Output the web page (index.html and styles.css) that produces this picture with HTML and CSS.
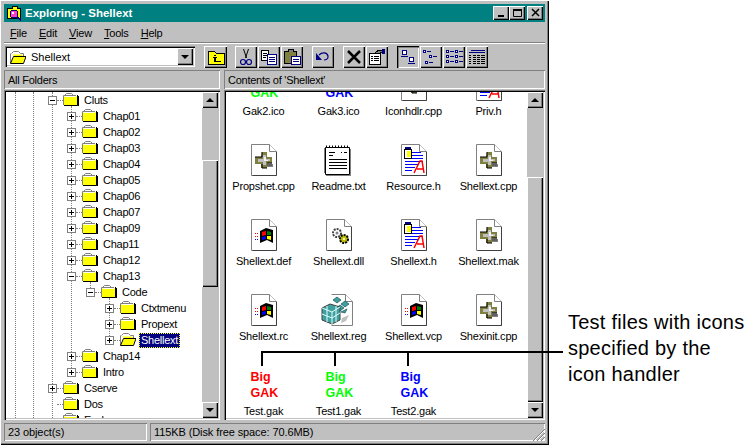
FILE: index.html
```html
<!DOCTYPE html>
<html lang="en">
<head>
<meta charset="utf-8">
<title>Exploring - Shellext</title>
<link rel="stylesheet" href="styles.css">
</head>
<body>
<svg class="defs" width="0" height="0" aria-hidden="true">
  <symbol id="folder" viewBox="0 0 16 14">
    <path d="M1.500 3.500L3.500 1.500H8.500L10.500 3.500" fill="#ffffff" stroke="#808080"/>
    <rect x="1" y="4" width="13" height="9" fill="#ffff00"/>
    <path d="M.5 13V3.500H13" fill="none" stroke="#808080"/>
    <path d="M1.500 4.500H13" stroke="#ffffff" fill="none"/>
    <path d="M14.500 3V13.500H1M15.500 4V14H2" fill="none" stroke="#000000"/>
  </symbol>
  <symbol id="openfolder" viewBox="0 0 16 14">
    <path d="M1.500 3.500L3.500 1.500H8.500L10.500 3.500H13.500V6" fill="#ffffff" stroke="#808080"/>
    <path d="M.5 13V3.500" fill="none" stroke="#808080"/>
    <path d="M1 13L4 6H16L13 13Z" fill="#ffff00"/>
    <path d="M.5 13.500H13.500L16 6.500H3.500L.5 13.500" fill="none" stroke="#000000"/>
    <path d="M2 4.500H12.500V6H4" fill="#ffff00"/>
  </symbol>
  <symbol id="page" viewBox="0 0 32 32">
    <path d="M3.500 .5H21.500L28.500 7.500V31.500H3.500Z" fill="#ffffff" stroke="#808080"/>
    <path d="M21.500 .5V7.500H28.500" fill="#ffffff" stroke="#808080"/>
    <path d="M4.500 31.500H28.500V8" fill="none" stroke="#404040"/>
  </symbol>
  <symbol id="cpp" viewBox="0 0 32 32">
    <use href="#page" width="32" height="32"/>
    <path d="M19 20H25V23H15V24H19Z" fill="#808080"/>
    <path d="M14 8H19V13H24V19H19V24H13V20H7V13H13Z" fill="#808040"/>
    <path d="M14 8V13H7M14 20V24H19M19 19H24" fill="none" stroke="#000000"/>
    <path d="M15 11H18V15H22V17H18V21H15V18H10V15H15Z" fill="#c0c0c0"/>
    <path d="M16 13H18V16H20V17H16Z" fill="#ffffff" opacity=".8"/>
    <path d="M19 19H24V22H19Z" fill="#606060"/>
  </symbol>
  <symbol id="win" viewBox="0 0 32 32">
    <use href="#page" width="32" height="32"/>
    <path d="M12 12L18 9L25 11V24L19 21L12 24Z" fill="#000000"/>
    <path d="M14 13L18 12V16L14 17Z" fill="#ff0000"/>
    <path d="M19 12L23 13V16L19 16Z" fill="#008000"/>
    <path d="M14 18L18 17V20L14 21Z" fill="#0000ff"/>
    <path d="M19 17L23 17V21L19 20Z" fill="#ffff00"/>
    <path d="M7 14.500H11M7 17.500H11" stroke="#ff0000" stroke-dasharray="1 1"/>
    <path d="M7 20.500H11" stroke="#0000ff" stroke-dasharray="1 1"/>
  </symbol>
  <symbol id="dll" viewBox="0 0 32 32">
    <use href="#page" width="32" height="32"/>
    <circle cx="14" cy="14" r="4" fill="#ffffff" stroke="#404040" stroke-width="2" stroke-dasharray="2 1"/>
    <circle cx="21" cy="20" r="4" fill="#c0c000" stroke="#000000" stroke-width="2" stroke-dasharray="2 1"/>
    <circle cx="21" cy="20" r="1" fill="#ffffff"/>
    <circle cx="14" cy="14" r="1.500" fill="#808080"/>
  </symbol>
  <symbol id="res" viewBox="0 0 32 32">
    <use href="#page" width="32" height="32"/>
    <rect x="6.500" y="5.500" width="7" height="9" fill="#ffffff" stroke="#000000"/>
    <rect x="9" y="7" width="4" height="6" fill="#ffff00"/>
    <rect x="7" y="3" width="6" height="2" fill="#000080"/>
    <path d="M14 8.500H23M14 11.500H25M14 14.500H25M7 17.500H25M7 20.500H20M7 23.500H17M7 26.500H14" stroke="#0000ff"/>
    <path d="M16 29L22 17H24L26 29M19 25H25" fill="none" stroke="#ff0000" stroke-width="1.500"/>
  </symbol>
  <symbol id="note" viewBox="0 0 32 32">
    <path d="M2.500 3.500H26.500V30.500H2.500Z" fill="#ffffff" stroke="#000000"/>
    <path d="M1.500 4V29M27.500 5V31M3 31.500H28" stroke="#808080" fill="none"/>
    <path d="M3.500 1.500V4M6.500 1.500V4M9.500 1.500V4M12.500 1.500V4M15.500 1.500V4M18.500 1.500V4M21.500 1.500V4M24.500 1.500V4" stroke="#000000"/>
    <path d="M6 8.500H12M18 8.500H19M21 8.500H24M6 11.500H10M6 15.500H24M6 18.500H24M6 21.500H24M6 24.500H24" stroke="#000000"/>
  </symbol>
  <symbol id="reg" viewBox="0 0 36 32">
    <path d="M10.500 .5H24.500L31.500 7.500V31.500H10.500" fill="#ffffff" stroke="#808080"/>
    <path d="M24.500 .5V7.500H31.500" fill="#ffffff" stroke="#808080"/>
    <path d="M16 3L20 6L16 9L12 6ZM24 7L28 10L24 13L20 10ZM19 11L23 14L19 17L15 14ZM26 15L24 19L20 18Z" fill="#40a0a0" stroke="#004040" stroke-width=".6"/>
    <path d="M1 14L9 10L19 13V26L11 30L1 26Z" fill="#40a0a0" stroke="#404040"/>
    <path d="M1 14L11 18L19 13M11 18V30M1 20L11 24L19 19M6 12V28M15 12V28" stroke="#e0ffff" fill="none"/>
    <path d="M21 24L28 21L25 27L20 29Z" fill="#c0c0c0"/>
  </symbol>
</svg>

<main class="page">
  <section class="window">
    <header class="titlebar">
      <svg class="title-icon" width="16" height="16" viewBox="0 0 16 16" shape-rendering="crispEdges">
        <path d="M1 3H6V1H11V3H14V13H1Z" fill="#ffff00" stroke="#000000"/>
        <circle cx="8" cy="9" r="4" fill="#ff40c0" stroke="#000080"/>
        <circle cx="7" cy="8" r="1.500" fill="#ffffff"/>
        <path d="M11 12L15 15" stroke="#000080" stroke-width="2"/>
      </svg>
      <span class="title-text">Exploring - Shellext</span>
      <div class="caption-buttons">
        <button class="cap raised"><svg width="10" height="10" viewBox="0 0 10 10"><rect x="1" y="7" width="6" height="2"/></svg></button>
        <button class="cap raised"><svg width="10" height="10" viewBox="0 0 10 10"><path d="M.5 1.500H8.500V8.500H.5Z" fill="none" stroke="#000"/><rect y="1" width="9" height="2"/></svg></button>
        <button class="cap raised cap-close"><svg width="10" height="10" viewBox="0 0 10 10"><path d="M1 1L8 8M8 1L1 8" stroke="#000" stroke-width="1.500"/></svg></button>
      </div>
    </header>

    <nav class="menubar">
      <span class="menu"><u>F</u>ile</span>
      <span class="menu"><u>E</u>dit</span>
      <span class="menu"><u>V</u>iew</span>
      <span class="menu"><u>T</u>ools</span>
      <span class="menu"><u>H</u>elp</span>
    </nav>

    <div class="toolbar">
      <div class="combo">
        <svg class="combo-icon" width="16" height="14"><use href="#openfolder"/></svg>
        <span class="combo-text">Shellext</span>
        <span class="combo-drop raised"><i class="arrow-down"></i></span>
      </div>
      <div class="tool-group group-up">
        <button class="tool tool-up raised">
          <svg width="20" height="16" viewBox="0 0 20 16" shape-rendering="crispEdges">
            <path d="M2 2H8L10 4H18V15H2Z" fill="#ffff00" stroke="#000000"/>
            <path d="M8 6H10V7H8ZM7 8H11V9H7ZM8 9H10V12H15V13H8Z"/>
          </svg>
        </button>
      </div>
      <div class="tool-group group-edit">
        <button class="tool raised">
          <svg width="16" height="18" viewBox="0 0 16 18">
            <path d="M5.500 1L8.500 10M10.500 1L7.500 10" stroke="#000000"/>
            <circle cx="5" cy="14" r="2.500" fill="none" stroke="#000080" stroke-width="1.200"/>
            <circle cx="11" cy="14" r="2.500" fill="none" stroke="#000080" stroke-width="1.200"/>
          </svg>
        </button>
        <button class="tool raised">
          <svg width="18" height="16" viewBox="0 0 18 16" shape-rendering="crispEdges">
            <path d="M1.500 1.500H8.500V11.500H1.500Z" fill="#ffffff" stroke="#000000"/>
            <path d="M3 4.500H7M3 6.500H7M3 8.500H6" stroke="#000000"/>
            <path d="M7.500 5.500H16.500V15.500H7.500Z" fill="#ffffff" stroke="#000080"/>
            <path d="M9 8.500H15M9 10.500H15M9 12.500H15" stroke="#000080"/>
          </svg>
        </button>
        <button class="tool raised">
          <svg width="18" height="18" viewBox="0 0 18 18" shape-rendering="crispEdges">
            <path d="M1.500 3.500H13.500V15.500H1.500Z" fill="#808040" stroke="#000000"/>
            <path d="M5 3.500V1.500H10V3.500" fill="#808080" stroke="#000000"/>
            <path d="M8.500 8.500H17.500V16.500H8.500Z" fill="#ffffff" stroke="#000080"/>
            <path d="M10 11.500H16M10 13.500H16" stroke="#000080"/>
          </svg>
        </button>
      </div>
      <div class="tool-group group-undo">
        <button class="tool raised">
          <svg width="16" height="14" viewBox="0 0 16 14">
            <path d="M4 5C7 2 12 2 13 6C13.500 9 11 10 9 10" fill="none" stroke="#000080" stroke-width="1.200"/>
            <path d="M1 3V10H7Z" fill="#000080"/>
          </svg>
        </button>
      </div>
      <div class="tool-group group-del">
        <button class="tool raised">
          <svg width="16" height="16" viewBox="0 0 16 16"><path d="M2 2L14 14M14 2L2 14" stroke="#000000" stroke-width="2.500"/></svg>
        </button>
        <button class="tool raised">
          <svg width="18" height="16" viewBox="0 0 18 16" shape-rendering="crispEdges">
            <path d="M1.500 4.500H12.500V15.500H1.500Z" fill="#ffffff" stroke="#000000"/>
            <path d="M3 7.500H5M6 7.500H11M3 9.500H5M6 9.500H11M3 11.500H5M6 11.500H11" stroke="#000000"/>
            <path d="M7 4L11 1H14V3L11 5Z" fill="#808080" stroke="#000000"/>
            <rect x="14" y="0" width="3" height="5" fill="#000080"/>
          </svg>
        </button>
      </div>
      <div class="tool-group group-view">
        <button class="tool sunken-btn">
          <svg width="18" height="16" viewBox="0 0 18 16" shape-rendering="crispEdges">
            <path d="M3.500 1.500H7.500V5.500H3.500ZM10.500 8.500H14.500V12.500H10.500Z" fill="#ffffff" stroke="#000080"/>
            <path d="M2 7.500H9M9 14.500H16" stroke="#000080"/>
          </svg>
        </button>
        <button class="tool raised">
          <svg width="18" height="16" viewBox="0 0 18 16" shape-rendering="crispEdges">
            <path d="M1.500 1.500H3.500V3.500H1.500ZM7.500 6.500H9.500V8.500H7.500ZM3.500 12.500H5.500V14.500H3.500Z" fill="#ffffff" stroke="#000080"/>
            <path d="M5 2.500H9M11 7.500H15M7 13.500H11" stroke="#000080"/>
          </svg>
        </button>
        <button class="tool raised">
          <svg width="18" height="16" viewBox="0 0 18 16" shape-rendering="crispEdges">
            <path d="M1.500 1.500H3.500V3.500H1.500ZM1.500 6.500H3.500V8.500H1.500ZM1.500 11.500H3.500V13.500H1.500ZM10.500 1.500H12.500V3.500H10.500ZM10.500 6.500H12.500V8.500H10.500ZM10.500 11.500H12.500V13.500H10.500Z" fill="#ffffff" stroke="#000080"/>
            <path d="M5 2.500H9M5 7.500H9M5 12.500H9M14 2.500H18M14 7.500H18M14 12.500H18" stroke="#000080"/>
          </svg>
        </button>
        <button class="tool raised">
          <svg width="18" height="16" viewBox="0 0 18 16" shape-rendering="crispEdges">
            <path d="M3 1.500H17M1 3.500H17" stroke="#000080"/>
            <path d="M1 6.500H3M5 6.500H8M9 6.500H12M13 6.500H17M1 8.500H3M5 8.500H8M9 8.500H12M13 8.500H17M1 10.500H3M5 10.500H8M9 10.500H12M13 10.500H17M1 12.500H3M5 12.500H8M9 12.500H12M13 12.500H17M1 14.500H3M5 14.500H8M9 14.500H12M13 14.500H17" stroke="#000000"/>
          </svg>
        </button>
      </div>
    </div>

    <div class="explorer">
      <div class="pane-head">All Folders</div>
      <div class="pane-head">Contents of 'Shellext'</div>

      <div class="pane">
        <div class="tree">
          <i class="guide guide-a"></i>
          <i class="guide guide-b"></i>
          <i class="guide guide-c"></i>
          <i class="guide guide-d"></i>
          <i class="guide guide-e"></i>
          <i class="guide guide-f"></i>

          <div class="row lv1"><b class="box minus"></b><svg class="fld" width="16" height="14"><use href="#folder"/></svg><span class="label">Cluts</span></div>
          <div class="row lv2"><b class="box plus"></b><svg class="fld" width="16" height="14"><use href="#folder"/></svg><span class="label">Chap01</span></div>
          <div class="row lv2"><b class="box plus"></b><svg class="fld" width="16" height="14"><use href="#folder"/></svg><span class="label">Chap02</span></div>
          <div class="row lv2"><b class="box plus"></b><svg class="fld" width="16" height="14"><use href="#folder"/></svg><span class="label">Chap03</span></div>
          <div class="row lv2"><b class="box plus"></b><svg class="fld" width="16" height="14"><use href="#folder"/></svg><span class="label">Chap04</span></div>
          <div class="row lv2"><b class="box plus"></b><svg class="fld" width="16" height="14"><use href="#folder"/></svg><span class="label">Chap05</span></div>
          <div class="row lv2"><b class="box plus"></b><svg class="fld" width="16" height="14"><use href="#folder"/></svg><span class="label">Chap06</span></div>
          <div class="row lv2"><b class="box plus"></b><svg class="fld" width="16" height="14"><use href="#folder"/></svg><span class="label">Chap07</span></div>
          <div class="row lv2"><b class="box plus"></b><svg class="fld" width="16" height="14"><use href="#folder"/></svg><span class="label">Chap09</span></div>
          <div class="row lv2"><b class="box plus"></b><svg class="fld" width="16" height="14"><use href="#folder"/></svg><span class="label">Chap11</span></div>
          <div class="row lv2"><b class="box plus"></b><svg class="fld" width="16" height="14"><use href="#folder"/></svg><span class="label">Chap12</span></div>
          <div class="row lv2"><b class="box minus"></b><svg class="fld" width="16" height="14"><use href="#folder"/></svg><span class="label">Chap13</span></div>
          <div class="row lv3"><b class="box minus"></b><svg class="fld" width="16" height="14"><use href="#folder"/></svg><span class="label">Code</span></div>
          <div class="row lv4"><b class="box plus"></b><svg class="fld" width="16" height="14"><use href="#folder"/></svg><span class="label">Ctxtmenu</span></div>
          <div class="row lv4"><b class="box plus"></b><svg class="fld" width="16" height="14"><use href="#folder"/></svg><span class="label">Propext</span></div>
          <div class="row lv4"><b class="box plus"></b><svg class="fld" width="16" height="14"><use href="#openfolder"/></svg><span class="label selected">Shellext</span></div>
          <div class="row lv2"><b class="box plus"></b><svg class="fld" width="16" height="14"><use href="#folder"/></svg><span class="label">Chap14</span></div>
          <div class="row lv2"><b class="box plus"></b><svg class="fld" width="16" height="14"><use href="#folder"/></svg><span class="label">Intro</span></div>
          <div class="row lv1"><b class="box plus"></b><svg class="fld" width="16" height="14"><use href="#folder"/></svg><span class="label">Cserve</span></div>
          <div class="row lv1"><b class="box none"></b><svg class="fld" width="16" height="14"><use href="#folder"/></svg><span class="label">Dos</span></div>
          <div class="row lv1"><b class="box none"></b><svg class="fld" width="16" height="14"><use href="#folder"/></svg><span class="label">Exchange</span></div>
        </div>
        <div class="scrollbar">
          <span class="sb-btn raised"><i class="arrow-up"></i></span>
          <span class="sb-gap tree-gap"></span>
          <span class="sb-thumb raised tree-thumb"></span>
          <span class="sb-rest"></span>
          <span class="sb-btn raised"><i class="arrow-down"></i></span>
        </div>
      </div>

      <div class="pane">
        <div class="files">
          <div class="file-grid">
            <figure class="file"><div class="gak gak-green"><span>Big</span><span>GAK</span></div><figcaption>Gak2.ico</figcaption></figure>
            <figure class="file"><div class="gak gak-blue"><span>Big</span><span>GAK</span></div><figcaption>Gak3.ico</figcaption></figure>
            <figure class="file"><svg width="32" height="32"><use href="#cpp"/></svg><figcaption>Iconhdlr.cpp</figcaption></figure>
            <figure class="file"><svg width="32" height="32"><use href="#res"/></svg><figcaption>Priv.h</figcaption></figure>

            <figure class="file"><svg width="32" height="32"><use href="#cpp"/></svg><figcaption>Propshet.cpp</figcaption></figure>
            <figure class="file"><svg width="32" height="32"><use href="#note"/></svg><figcaption>Readme.txt</figcaption></figure>
            <figure class="file"><svg width="32" height="32"><use href="#res"/></svg><figcaption>Resource.h</figcaption></figure>
            <figure class="file"><svg width="32" height="32"><use href="#cpp"/></svg><figcaption>Shellext.cpp</figcaption></figure>

            <figure class="file"><svg width="32" height="32"><use href="#win"/></svg><figcaption>Shellext.def</figcaption></figure>
            <figure class="file"><svg width="32" height="32"><use href="#dll"/></svg><figcaption>Shellext.dll</figcaption></figure>
            <figure class="file"><svg width="32" height="32"><use href="#res"/></svg><figcaption>Shellext.h</figcaption></figure>
            <figure class="file"><svg width="32" height="32"><use href="#cpp"/></svg><figcaption>Shellext.mak</figcaption></figure>

            <figure class="file"><svg width="32" height="32"><use href="#win"/></svg><figcaption>Shellext.rc</figcaption></figure>
            <figure class="file"><svg width="36" height="32"><use href="#reg"/></svg><figcaption>Shellext.reg</figcaption></figure>
            <figure class="file"><svg width="32" height="32"><use href="#win"/></svg><figcaption>Shellext.vcp</figcaption></figure>
            <figure class="file"><svg width="32" height="32"><use href="#cpp"/></svg><figcaption>Shexinit.cpp</figcaption></figure>

            <figure class="file"><div class="gak gak-red"><span>Big</span><span>GAK</span></div><figcaption>Test.gak</figcaption></figure>
            <figure class="file"><div class="gak gak-green"><span>Big</span><span>GAK</span></div><figcaption>Test1.gak</figcaption></figure>
            <figure class="file"><div class="gak gak-blue"><span>Big</span><span>GAK</span></div><figcaption>Test2.gak</figcaption></figure>
          </div>
        </div>
        <div class="scrollbar">
          <span class="sb-btn raised"><i class="arrow-up"></i></span>
          <span class="sb-gap file-gap"></span>
          <span class="sb-thumb raised file-thumb"></span>
          <span class="sb-btn raised"><i class="arrow-down"></i></span>
        </div>
      </div>
    </div>

    <footer class="statusbar">
      <div class="status status-count">23 object(s)</div>
      <div class="status status-disk">
        <span>115KB (Disk free space: 70.6MB)</span>
        <svg class="grip" width="13" height="13" viewBox="0 0 13 13"><path d="M13 1L1 13M13 5L5 13M13 9L9 13" stroke="#808080" fill="none"/><path d="M13 2L2 13M13 6L6 13M13 10L10 13" stroke="#ffffff" fill="none"/></svg>
      </div>
    </footer>
  </section>

  <aside class="callout">Test files with icons<br>specified by the<br>icon handler</aside>

  <i class="lead lead-h"></i>
  <i class="lead lead-v1"></i>
  <i class="lead lead-v2"></i>
  <i class="lead lead-v3"></i>
</main>
</body>
</html>
```

FILE: styles.css
```css
* { box-sizing: border-box; }

html, body {
  margin: 0;
  padding: 0;
  background: #ffffff;
}

body {
  font-family: "Liberation Sans", Arial, sans-serif;
  font-size: 11px;
  color: #000000;
  overflow: hidden;
}

.defs { position: absolute; }

.page {
  position: relative;
  display: flex;
  width: 751px;
  height: 447px;
}

.raised {
  background: #c0c0c0;
  border: 0;
  box-shadow: inset 1px 1px 0 #ffffff, inset -1px -1px 0 #000000, inset -2px -2px 0 #808080;
}

.window {
  display: flex;
  flex-direction: column;
  flex: none;
  width: 549px;
  height: 445px;
  padding: 4px 4px 3px 4px;
  background: #c0c0c0;
  box-shadow: inset 1px 1px 0 #ffffff, inset -1px -1px 0 #000000, inset -2px -2px 0 #808080;
}

/* title bar */
.titlebar {
  display: flex;
  align-items: center;
  flex: none;
  height: 18px;
  padding: 0 2px;
  background: #008080;
  color: #ffffff;
}

.title-icon { flex: none; margin-right: 3px; }

.title-text {
  font-size: 11.500px;
  font-weight: 700;
}

.caption-buttons { display: flex; margin-left: auto; }

.cap {
  display: flex;
  align-items: center;
  justify-content: center;
  width: 16px;
  height: 14px;
  padding: 0 0 0 1px;
}

.cap-close { margin-left: 2px; }

/* menu */
.menubar {
  display: flex;
  align-items: center;
  flex: none;
  height: 21px;
  padding: 1px 0 0;
  border-bottom: 1px solid #808080;
  box-shadow: 0 1px 0 #ffffff;
}

.menu { padding: 0 6px; font-size: 11px; letter-spacing: -.2px; }

/* toolbar */
.toolbar {
  display: flex;
  align-items: flex-start;
  flex: none;
  height: 26px;
  padding: 3px 0 0 1px;
}

.combo {
  display: flex;
  align-items: center;
  width: 190px;
  height: 21px;
  padding-left: 5px;
  background: #ffffff;
  box-shadow: inset 1px 1px 0 #808080, inset 2px 2px 0 #000000, inset -1px -1px 0 #ffffff, inset -2px -2px 0 #c0c0c0;
}

.combo-text { margin-left: 5px; font-size: 11px; }

.combo-drop {
  display: flex;
  align-items: center;
  justify-content: center;
  width: 16px;
  height: 17px;
  margin-left: auto;
  margin-right: 2px;
}

.tool-group { display: flex; gap: 1px; }
.group-up { margin-left: 9px; }
.group-edit { margin-left: 8px; }
.group-undo { margin-left: 9px; }
.group-del { margin-left: 9px; }
.group-view { margin-left: 9px; }

.tool {
  display: flex;
  align-items: center;
  justify-content: center;
  width: 22px;
  height: 22px;
  padding: 0;
}

.tool-up { width: 23px; }

.sunken-btn {
  background: #c0c0c0;
  border: 0;
  box-shadow: inset 1px 1px 0 #000000, inset 2px 2px 0 #808080, inset -1px -1px 0 #ffffff;
}

/* panes */
.explorer {
  display: grid;
  flex: none;
  grid-template-columns: 216px 321px;
  grid-template-rows: 19px 330px;
  column-gap: 4px;
  row-gap: 1px;
  margin-top: 1px;
}

.pane-head {
  padding: 3px 0 0 4px;
  line-height: 14px;
  font-size: 11px;
  letter-spacing: -.25px;
  box-shadow: inset 1px 1px 0 #808080, inset -1px -1px 0 #ffffff;
}

.pane {
  display: flex;
  overflow: hidden;
  padding: 2px;
  background: #ffffff;
  box-shadow: inset 1px 1px 0 #808080, inset 2px 2px 0 #000000, inset -1px -1px 0 #ffffff, inset -2px -2px 0 #c0c0c0;
}

/* tree */
.tree {
  position: relative;
  flex: 1;
  min-width: 0;
  overflow: hidden;
}

.guide {
  position: absolute;
  width: 0;
  border-left: 1px dotted #808080;
}

.guide-a { left: 9px; top: 0; bottom: 0; }
.guide-b { left: 27px; top: 0; bottom: 0; }
.guide-c { left: 46px; top: 0; bottom: 0; }
.guide-d { left: 65px; top: 14px; height: 266px; }
.guide-e { left: 84px; top: 190px; height: 10px; }
.guide-f { left: 103px; top: 206px; height: 42px; }

.row {
  position: relative;
  display: flex;
  align-items: center;
  height: 16px;
}

.lv1 { padding-left: 42px; }
.lv2 { padding-left: 61px; }
.lv3 { padding-left: 80px; }
.lv4 { padding-left: 99px; }

.box {
  position: relative;
  flex: none;
  width: 9px;
  height: 9px;
  background: #ffffff;
  border: 1px solid #808080;
}

.box::before {
  content: "";
  position: absolute;
  left: 1px;
  top: 3px;
  width: 5px;
  height: 1px;
  background: #000000;
}

.plus::after {
  content: "";
  position: absolute;
  left: 3px;
  top: 1px;
  width: 1px;
  height: 5px;
  background: #000000;
}

.none { background: transparent; border: 0; }
.none::before { display: none; }

.fld {
  flex: none;
  margin-left: 6px;
  margin-top: -2px;
}

.row::after {
  content: "";
  position: absolute;
  width: 6px;
  height: 0;
  top: 8px;
  border-top: 1px dotted #808080;
}

.lv1::after { left: 51px; }
.lv2::after { left: 70px; }
.lv3::after { left: 89px; }
.lv4::after { left: 108px; }

.label {
  margin-left: 3px;
  padding: 1px 2px;
  line-height: 13px;
  font-size: 11px;
  letter-spacing: -.25px;
}

.selected {
  background: #000080;
  color: #ffffff;
  outline: 1px dotted #ffff00;
  outline-offset: -1px;
}

/* scrollbar */
.scrollbar {
  display: flex;
  flex: none;
  flex-direction: column;
  width: 16px;
  background: #c0c0c0;
}

.sb-btn {
  display: flex;
  flex: none;
  align-items: center;
  justify-content: center;
  height: 16px;
}

.sb-gap { flex: none; }
.tree-gap { height: 52px; }
.file-gap { height: 69px; }
.sb-thumb { display: block; flex: none; }
.tree-thumb { height: 127px; }
.file-thumb { height: 225px; }
.sb-rest { flex: 1; }

.arrow-up {
  width: 0;
  height: 0;
  border: 4px solid transparent;
  border-top: 0;
  border-bottom-color: #000000;
}

.arrow-down {
  width: 0;
  height: 0;
  border: 4px solid transparent;
  border-bottom: 0;
  border-top-color: #000000;
}

/* file grid */
.files {
  flex: 1;
  min-width: 0;
  overflow: hidden;
}

.file-grid {
  display: grid;
  grid-template-columns: repeat(4, 75px);
  grid-auto-rows: 75px;
  margin-top: -23px;
}

.file {
  display: flex;
  flex-direction: column;
  align-items: center;
  margin: 0;
}

.file svg { flex: none; display: block; }

.file figcaption {
  margin-top: 3px;
  line-height: 15px;
  font-size: 11px;
  letter-spacing: -.2px;
  white-space: nowrap;
}

.gak {
  display: flex;
  flex-direction: column;
  width: 32px;
  height: 32px;
  padding-left: 3px;
  font-size: 12.500px;
  font-weight: 700;
  line-height: 16px;
}

.gak-red { color: #ff0000; }
.gak-green { color: #00ff00; }
.gak-blue { color: #0000ff; }

/* status bar */
.statusbar {
  display: flex;
  flex: none;
  gap: 3px;
  height: 18px;
  margin-top: 3px;
}

.status {
  display: flex;
  align-items: center;
  padding-left: 4px;
  font-size: 11px;
  letter-spacing: -.1px;
  box-shadow: inset 1px 1px 0 #808080, inset -1px -1px 0 #ffffff;
}

.status-count { width: 143px; }
.status-disk { flex: 1; }
.grip { margin-left: auto; margin-top: 4px; }

/* annotation */
.callout {
  flex: none;
  margin: 309px 0 0 19px;
  line-height: 26px;
  font-size: 20px;
  letter-spacing: .25px;
  white-space: nowrap;
}

.lead {
  position: absolute;
  background: #000000;
}

.lead-h { left: 261px; top: 351px; width: 302px; height: 2px; }
.lead-v1 { left: 261px; top: 351px; width: 2px; height: 15px; }
.lead-v2 { left: 334px; top: 351px; width: 2px; height: 15px; }
.lead-v3 { left: 407px; top: 351px; width: 2px; height: 15px; }
```
